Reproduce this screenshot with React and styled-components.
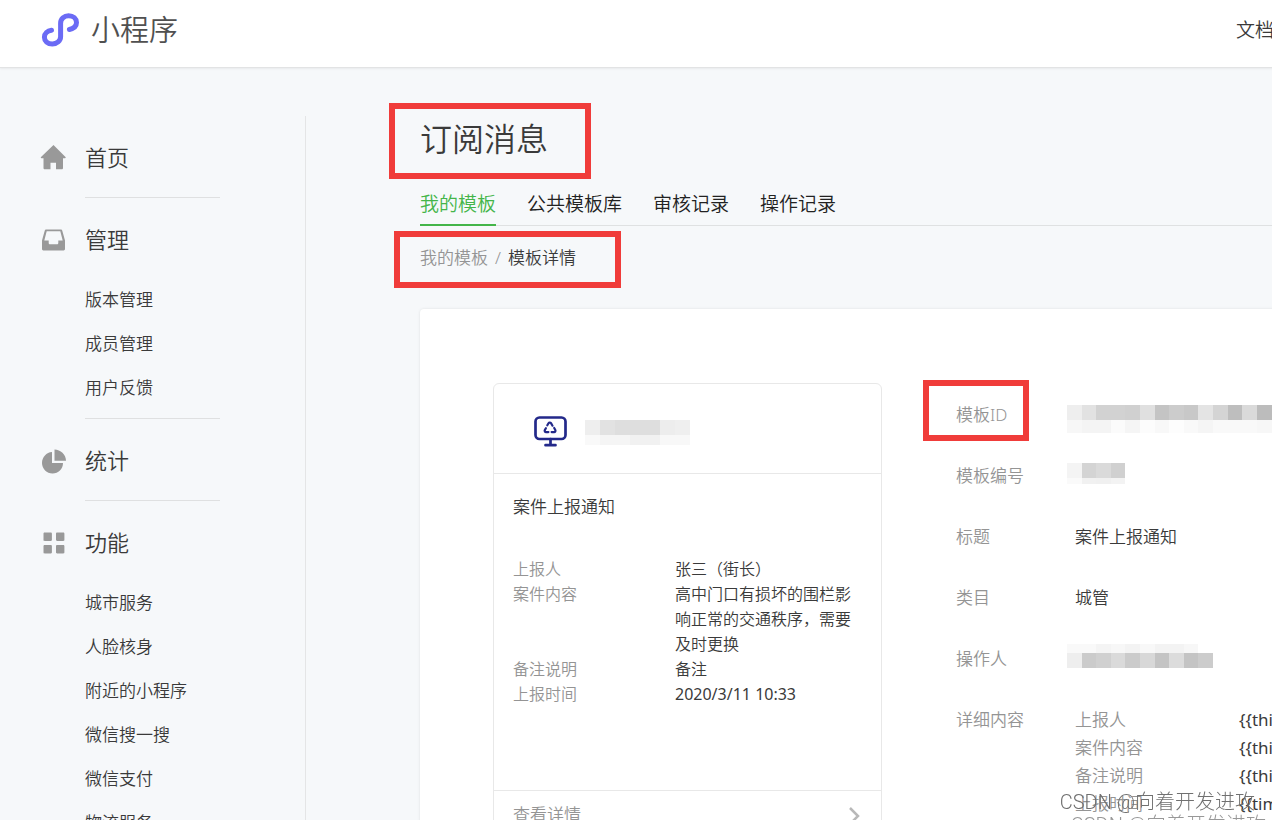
import React from 'react';
import styled, { createGlobalStyle } from 'styled-components';

const GlobalStyle = createGlobalStyle`
  * {
    box-sizing: border-box;
  }

  body {
    margin: 0;
    background-color: #f6f8fa;
    color: #3a3a3a;
    font-family: 'Noto Sans', 'Noto Sans CJK SC', sans-serif;
    font-weight: 350;
  }

  a {
    color: inherit;
    text-decoration: none;
  }
`;

const Viewport = styled.div`
  height: 100vh;
  overflow: hidden;
`;

const Page = styled.div`
  min-width: 1300px;
  min-height: 100%;
  display: flex;
  flex-direction: column;
`;

const Header = styled.header`
  display: flex;
  align-items: center;
  justify-content: space-between;
  height: 68px;
  padding: 0 26px 8px 41px;
  background-color: #ffffff;
  border-bottom: 1px solid #e2e3e4;
  box-shadow: 0 1px 2px rgba(0, 0, 0, 0.06);
`;

const Brand = styled.a`
  display: flex;
  align-items: center;
  gap: 11px;
  font-size: 29px;
  line-height: 40px;
  color: #505050;
`;

const HeaderLink = styled.a`
  font-size: 19px;
  line-height: 28px;
`;

const Body = styled.div`
  flex: 1;
  display: flex;
  padding-top: 48px;
`;

const Sidebar = styled.nav`
  flex: none;
  width: 306px;
  padding-left: 40px;
  border-right: 1px solid #e4e5e6;
`;

const Group = styled.section`
  padding-top: 20px;
`;

const GroupTitle = styled.a`
  display: flex;
  align-items: center;
  gap: 18px;
  height: 44px;
  font-size: 22px;
  line-height: 42px;
`;

const GroupName = styled.span`
  height: 44px;
`;

const GroupBody = styled.div`
  width: 135px;
  margin-left: 45px;
  padding: ${(props) => (props.$filled ? '16px 0 8px' : '17px 0 0')};
  border-bottom: 1px solid #dfe0e1;
`;

const MenuLink = styled.a`
  display: block;
  font-size: 17px;
  line-height: 44px;
`;

const Main = styled.main`
  flex: 1;
  min-width: 0;
  padding-left: 114px;
`;

const Marked = styled.div`
  position: relative;
  width: fit-content;
`;

const Marker = styled.span`
  position: absolute;
  inset: ${(props) => props.$inset};
  border: 6px solid #f03c3a;
  pointer-events: none;
`;

const Title = styled.h1`
  margin: 0;
  font-size: 32px;
  line-height: 46px;
  font-weight: 350;
`;

const Tabs = styled.div`
  display: flex;
  gap: 31px;
  margin-top: 28px;
  box-shadow: inset 0 -1px #dfe1e2;
`;

const Tab = styled.a`
  padding-bottom: 6px;
  border-bottom: 2px solid ${(props) => (props.$active ? '#44b549' : 'transparent')};
  color: ${(props) => (props.$active ? '#44b549' : '#222222')};
  font-size: 19px;
  line-height: 28px;
`;

const Breadcrumb = styled.div`
  display: flex;
  gap: 7px;
  margin-top: 18px;
  font-size: 17px;
  line-height: 28px;
`;

const Muted = styled.span`
  color: #949494;
`;

const Value = styled.span`
  font-weight: ${(props) => (props.$latin ? 400 : 350)};
`;

const Panel = styled.section`
  display: flex;
  align-items: flex-start;
  gap: 74px;
  margin-top: 37px;
  padding: 74px 0 74px 73px;
  background-color: #ffffff;
  border-radius: 4px;
  box-shadow: 0 0 3px rgba(0, 0, 0, 0.1);
`;

const Card = styled.article`
  flex: none;
  width: 389px;
  border: 1px solid #e8e8e8;
  border-radius: 6px;
`;

const CardHeader = styled.header`
  display: flex;
  align-items: center;
  gap: 18px;
  height: 89px;
  padding: 6px 40px 0;
`;

const CardBody = styled.div`
  min-height: 318px;
  padding: 20px 19px;
  border: solid #e8e8e8;
  border-width: 1px 0;
`;

const CardTitle = styled.h2`
  margin: 0 0 37px;
  font-size: 17px;
  line-height: 26px;
  font-weight: 350;
`;

const CardRow = styled.div`
  display: grid;
  grid-template-columns: 162px 1fr;
  font-size: 16px;
  line-height: 25px;
`;

const CardFooter = styled.a`
  display: flex;
  align-items: center;
  justify-content: space-between;
  height: 48px;
  padding: 0 21px 0 19px;
  color: #949494;
  font-size: 17px;
  line-height: 48px;
`;

const Details = styled.div`
  flex: 1;
  display: flex;
  flex-direction: column;
  gap: 33px;
  padding-top: 18px;
  font-size: 17px;
  line-height: 28px;
`;

const DetailRow = styled.div`
  display: grid;
  grid-template-columns: 119px 1fr;
`;

const FieldRow = styled.div`
  display: grid;
  grid-template-columns: 164px 1fr;
`;

const MosaicSvg = styled.svg`
  display: block;
  height: 28px;
  margin-left: ${(props) => props.$indent};
  overflow: visible;
`;

const Watermark = styled.div`
  position: fixed;
  right: ${(props) => props.$right};
  bottom: ${(props) => props.$bottom};
  color: ${(props) => props.$color};
  font-family: Roboto, 'Noto Sans CJK SC', sans-serif;
  font-size: 20px;
  line-height: 24px;
  font-weight: 300;
  white-space: nowrap;
  pointer-events: none;
`;

const groups = [
  { title: '首页', icon: 'home', items: [] },
  { title: '管理', icon: 'inbox', items: ['版本管理', '成员管理', '用户反馈'] },
  { title: '统计', icon: 'pie', items: [] },
  {
    title: '功能',
    icon: 'grid',
    items: ['城市服务', '人脸核身', '附近的小程序', '微信搜一搜', '微信支付', '物流服务'],
  },
];

const tabs = ['我的模板', '公共模板库', '审核记录', '操作记录'];

const cardRows = [
  { label: '上报人', value: '张三（街长）' },
  { label: '案件内容', value: '高中门口有损坏的围栏影响正常的交通秩序，需要及时更换' },
  { label: '备注说明', value: '备注' },
  { label: '上报时间', value: '2020/3/11 10:33', latin: true },
];

const fields = [
  ['上报人', '{{thi'],
  ['案件内容', '{{thi'],
  ['备注说明', '{{thi'],
  ['上报时间', '{{tim'],
];

// each band: top, height, then one grey per cell
const nameBands = [
  [2, 15, ['ee', 'e2', 'de', 'de', 'de', 'ed', 'ef']],
  [17, 10, ['f9', 'f5', 'f5', 'f1', 'f1', 'f8', 'f8']],
];
const idBands = [
  [4, 15, ['ee', 'e2', 'd2', 'd2', 'd0', 'e0', 'c4', 'cc', 'c8', 'e4', 'd4', 'be', 'da', 'bc', 'bc']],
  [19, 13, ['f7', 'f4', 'f4', 'fb', 'f5', 'fc', 'f8', 'fd', 'f9', 'f5', 'f9', 'f9', 'f9', 'f7', 'f7']],
];
const codeBands = [
  [1, 15, ['f4', 'd4', 'da', 'd0']],
  [16, 6, ['fa', 'f1', 'f0', 'f3']],
];
const operatorBands = [
  [-1, 9, ['f9', 'f9', 'f4', 'f7', 'f3', 'f8', 'f3', 'f3', 'f7']],
  [8, 15, ['ee', 'cb', 'd0', 'da', 'cb', 'd8', 'c4', 'dc', 'c4', 'cc']],
];

const Mosaic = ({ bands, cell = 14.6, indent = '-8px' }) => {
  const width = Math.ceil(Math.max(...bands.map((band) => band[2].length)) * cell);
  return (
    <MosaicSvg $indent={indent} width={width} aria-hidden="true" shapeRendering="crispEdges">
      {bands.map(([top, height, greys]) =>
        greys.map((grey, i) => (
          <rect
            key={`${top}-${i}`}
            x={i * cell}
            y={top}
            width={cell}
            height={height}
            fill={`#${grey}${grey}${grey}`}
          />
        ))
      )}
    </MosaicSvg>
  );
};

const Logo = () => (
  <svg width="39" height="36" viewBox="0 0 39 36" fill="none" aria-hidden="true">
    <path
      d="M10.500 18.200C6.400 18.800 3.400 21.500 3.400 25.200c0 3.800 3.300 6.900 7.900 6.900s8.300-3.200 8.300-7.300V11.200c0-4.200 3.500-7.500 8-7.500 4.600 0 7.900 3 7.900 6.900 0 3.400-3 6-7.100 6.900"
      stroke="#6b6bf5"
      strokeWidth="5"
      strokeLinecap="round"
    />
  </svg>
);

const shapes = {
  home: (
    <path d="M13.500 0 1 12c-.5.5-.2 1.200.5 1.200h2V23c0 .8.500 1.300 1.300 1.300h5.700v-6.500h5.500v6.500h5.700c.8 0 1.300-.5 1.300-1.300v-9.800h2c.7 0 1-.7.500-1.200z" />
  ),
  inbox: (
    <path
      fillRule="evenodd"
      d="M6.300 2.500h14.400c.8 0 1.400.4 1.600 1.200L25 13.500V22c0 .8-.6 1.400-1.400 1.400H3.400C2.600 23.400 2 22.800 2 22v-8.500L4.700 3.700c.2-.8.8-1.200 1.600-1.200zM6.700 4.200 4.300 13.500h4.400v2.500c0 .8.500 1.300 1.300 1.300h7c.8 0 1.300-.5 1.300-1.300v-2.500h4.400L20.300 4.200z"
    />
  ),
  pie: (
    <path d="M12 4v11h11c0 6-4.700 10.500-10.400 10.500C6.800 25.500 2 20.800 2 15S6.500 4.300 12 4zM14.500 1.500C20.500 1.500 26 6.500 26 12.700H14.500z" />
  ),
  grid: (
    <path d="M4.700 2.500h6c.8 0 1.200.4 1.200 1.200v6c0 .8-.4 1.200-1.200 1.200h-6c-.8 0-1.200-.4-1.200-1.200v-6c0-.8.4-1.200 1.200-1.200zM17.200 2.500h6c.8 0 1.200.4 1.200 1.200v6c0 .8-.4 1.200-1.200 1.200h-6c-.8 0-1.200-.4-1.200-1.200v-6c0-.8.4-1.200 1.200-1.200zM4.700 15h6c.8 0 1.200.4 1.200 1.200v6c0 .8-.4 1.200-1.200 1.200h-6c-.8 0-1.200-.4-1.200-1.200v-6c0-.8.4-1.200 1.200-1.200zM17.200 15h6c.8 0 1.200.4 1.200 1.200v6c0 .8-.4 1.200-1.200 1.200h-6c-.8 0-1.200-.4-1.200-1.200v-6c0-.8.4-1.200 1.200-1.200z" />
  ),
};

const MenuIcon = ({ name }) => (
  <svg width="27" height="27" viewBox="0 0 27 27" fill="#999999" aria-hidden="true">
    {shapes[name]}
  </svg>
);

const MonitorIcon = () => (
  <svg
    width="33"
    height="31"
    viewBox="0 0 33 31"
    fill="none"
    stroke="#23298a"
    strokeLinecap="round"
    aria-hidden="true"
  >
    <rect x="1.500" y="1.500" width="30" height="21.500" rx="4" strokeWidth="2.700" />
    <path d="M16.500 23v6M11.500 29.200h10" strokeWidth="2.700" />
    <path
      d="m13.300 9.300 1.200-2c.6-1 1.900-1 2.500-.1l1.500 2.500M20.200 12l1.100 1.900c.5 1-.1 2.200-1.200 2.200h-2.500M14.400 16.100h-2.300c-1.200 0-1.800-1.200-1.200-2.200l1-1.700"
      strokeWidth="2.200"
    />
  </svg>
);

const Chevron = () => (
  <svg width="12" height="20" viewBox="0 0 12 20" fill="none" aria-hidden="true">
    <path d="m2 3 8 8-8 8" stroke="#b8b8b8" strokeWidth="2.500" />
  </svg>
);

function SideMenu() {
  return (
    <Sidebar>
      {groups.map((group) => (
        <Group key={group.title}>
          <GroupTitle href="#">
            <MenuIcon name={group.icon} />
            <GroupName>{group.title}</GroupName>
          </GroupTitle>
          <GroupBody $filled={group.items.length > 0}>
            {group.items.map((item) => (
              <MenuLink href="#" key={item}>
                {item}
              </MenuLink>
            ))}
          </GroupBody>
        </Group>
      ))}
    </Sidebar>
  );
}

function MessageCard() {
  return (
    <Card>
      <CardHeader>
        <MonitorIcon />
        <Mosaic bands={nameBands} cell={15} indent="0" />
      </CardHeader>
      <CardBody>
        <CardTitle>案件上报通知</CardTitle>
        {cardRows.map((row) => (
          <CardRow key={row.label}>
            <Muted>{row.label}</Muted>
            <Value $latin={row.latin}>{row.value}</Value>
          </CardRow>
        ))}
      </CardBody>
      <CardFooter href="#">
        查看详情
        <Chevron />
      </CardFooter>
    </Card>
  );
}

function TemplateDetails() {
  return (
    <Details>
      <DetailRow>
        <Marked>
          <Muted>模板ID</Muted>
          <Marker $inset="-21px -22px -12px -33px" />
        </Marked>
        <Mosaic bands={idBands} />
      </DetailRow>
      <DetailRow>
        <Muted>模板编号</Muted>
        <Mosaic bands={codeBands} />
      </DetailRow>
      <DetailRow>
        <Muted>标题</Muted>
        <Value>案件上报通知</Value>
      </DetailRow>
      <DetailRow>
        <Muted>类目</Muted>
        <Value>城管</Value>
      </DetailRow>
      <DetailRow>
        <Muted>操作人</Muted>
        <Mosaic bands={operatorBands} />
      </DetailRow>
      <DetailRow>
        <Muted>详细内容</Muted>
        <div>
          {fields.map(([label, value]) => (
            <FieldRow key={label}>
              <Muted>{label}</Muted>
              <Value $latin>{value}</Value>
            </FieldRow>
          ))}
        </div>
      </DetailRow>
    </Details>
  );
}

function App() {
  return (
    <Viewport>
      <GlobalStyle />
      <Page>
        <Header>
          <Brand href="#">
            <Logo />
            小程序
          </Brand>
          <HeaderLink href="#">文档</HeaderLink>
        </Header>
        <Body>
          <SideMenu />
          <Main>
            <Marked>
              <Title>订阅消息</Title>
              <Marker $inset="-13px -43px -17px -31px" />
            </Marked>
            <Tabs>
              {tabs.map((tab, i) => (
                <Tab href="#" key={tab} $active={i === 0}>
                  {tab}
                </Tab>
              ))}
            </Tabs>
            <Marked>
              <Breadcrumb>
                <Muted as="a" href="#">
                  我的模板
                </Muted>
                <Muted>/</Muted>
                <span>模板详情</span>
              </Breadcrumb>
              <Marker $inset="-13px -45px -16px -26px" />
            </Marked>
            <Panel>
              <MessageCard />
              <TemplateDetails />
            </Panel>
          </Main>
        </Body>
      </Page>
      <Watermark $right="17px" $bottom="6px" $color="#707070">
        CSDN @向着开发进攻
      </Watermark>
      <Watermark $right="6px" $bottom="-17px" $color="#989898">
        CSDN @向着开发进攻
      </Watermark>
    </Viewport>
  );
}

export default App;
